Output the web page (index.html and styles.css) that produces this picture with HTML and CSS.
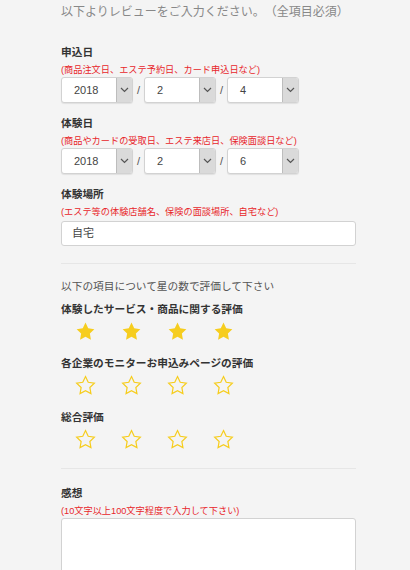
FILE: index.html
```html
<!DOCTYPE html>
<html lang="ja">
<head>
    <meta charset="UTF-8">
    <meta name="viewport" content="width=device-width, initial-scale=1.0">
    <title>レビュー入力</title>
    <link rel="stylesheet" href="styles.css">
</head>
<body>
    <div class="container">
        <p class="lead">以下よりレビューをご入力ください。（全項目必須）</p>

        <div class="field first">
            <div class="label">申込日</div>
            <div class="note">(商品注文日、エステ予約日、カード申込日など)</div>
            <div class="date-row">
                <div class="select"><span class="value">2018</span><span class="arrow"><svg width="9" height="6" viewBox="0 0 9 6"><path d="M1 1l3.5 3.5L8 1" fill="none" stroke="#555" stroke-width="1.2"/></svg></span></div>
                <span class="sep">/</span>
                <div class="select"><span class="value">2</span><span class="arrow"><svg width="9" height="6" viewBox="0 0 9 6"><path d="M1 1l3.5 3.5L8 1" fill="none" stroke="#555" stroke-width="1.2"/></svg></span></div>
                <span class="sep">/</span>
                <div class="select"><span class="value">4</span><span class="arrow"><svg width="9" height="6" viewBox="0 0 9 6"><path d="M1 1l3.5 3.5L8 1" fill="none" stroke="#555" stroke-width="1.2"/></svg></span></div>
            </div>
        </div>

        <div class="field">
            <div class="label">体験日</div>
            <div class="note">(商品やカードの受取日、エステ来店日、保険面談日など)</div>
            <div class="date-row">
                <div class="select"><span class="value">2018</span><span class="arrow"><svg width="9" height="6" viewBox="0 0 9 6"><path d="M1 1l3.5 3.5L8 1" fill="none" stroke="#555" stroke-width="1.2"/></svg></span></div>
                <span class="sep">/</span>
                <div class="select"><span class="value">2</span><span class="arrow"><svg width="9" height="6" viewBox="0 0 9 6"><path d="M1 1l3.5 3.5L8 1" fill="none" stroke="#555" stroke-width="1.2"/></svg></span></div>
                <span class="sep">/</span>
                <div class="select"><span class="value">6</span><span class="arrow"><svg width="9" height="6" viewBox="0 0 9 6"><path d="M1 1l3.5 3.5L8 1" fill="none" stroke="#555" stroke-width="1.2"/></svg></span></div>
            </div>
        </div>

        <div class="field">
            <div class="label">体験場所</div>
            <div class="note">(エステ等の体験店舗名、保険の面談場所、自宅など)</div>
            <div class="text-input">自宅</div>
        </div>

        <hr class="divider">

        <p class="question">以下の項目について星の数で評価して下さい</p>

        <div class="rating">
            <div class="label">体験したサービス・商品に関する評価</div>
            <div class="stars">
                <svg class="star" viewBox="0 0 24 24"><path class="full" d="M12 1.8l3.1 6.5 7 1-5.1 5 1.2 7L12 18l-6.2 3.3 1.2-7-5.1-5 7-1z"/></svg>
                <svg class="star" viewBox="0 0 24 24"><path class="full" d="M12 1.8l3.1 6.5 7 1-5.1 5 1.2 7L12 18l-6.2 3.3 1.2-7-5.1-5 7-1z"/></svg>
                <svg class="star" viewBox="0 0 24 24"><path class="full" d="M12 1.8l3.1 6.5 7 1-5.1 5 1.2 7L12 18l-6.2 3.3 1.2-7-5.1-5 7-1z"/></svg>
                <svg class="star" viewBox="0 0 24 24"><path class="full" d="M12 1.8l3.1 6.5 7 1-5.1 5 1.2 7L12 18l-6.2 3.3 1.2-7-5.1-5 7-1z"/></svg>
            </div>
        </div>

        <div class="rating">
            <div class="label">各企業のモニターお申込みページの評価</div>
            <div class="stars">
                <svg class="star" viewBox="0 0 24 24"><path class="empty" d="M12 1.8l3.1 6.5 7 1-5.1 5 1.2 7L12 18l-6.2 3.3 1.2-7-5.1-5 7-1z"/></svg>
                <svg class="star" viewBox="0 0 24 24"><path class="empty" d="M12 1.8l3.1 6.5 7 1-5.1 5 1.2 7L12 18l-6.2 3.3 1.2-7-5.1-5 7-1z"/></svg>
                <svg class="star" viewBox="0 0 24 24"><path class="empty" d="M12 1.8l3.1 6.5 7 1-5.1 5 1.2 7L12 18l-6.2 3.3 1.2-7-5.1-5 7-1z"/></svg>
                <svg class="star" viewBox="0 0 24 24"><path class="empty" d="M12 1.8l3.1 6.5 7 1-5.1 5 1.2 7L12 18l-6.2 3.3 1.2-7-5.1-5 7-1z"/></svg>
            </div>
        </div>

        <div class="rating">
            <div class="label">総合評価</div>
            <div class="stars">
                <svg class="star" viewBox="0 0 24 24"><path class="empty" d="M12 1.8l3.1 6.5 7 1-5.1 5 1.2 7L12 18l-6.2 3.3 1.2-7-5.1-5 7-1z"/></svg>
                <svg class="star" viewBox="0 0 24 24"><path class="empty" d="M12 1.8l3.1 6.5 7 1-5.1 5 1.2 7L12 18l-6.2 3.3 1.2-7-5.1-5 7-1z"/></svg>
                <svg class="star" viewBox="0 0 24 24"><path class="empty" d="M12 1.8l3.1 6.5 7 1-5.1 5 1.2 7L12 18l-6.2 3.3 1.2-7-5.1-5 7-1z"/></svg>
                <svg class="star" viewBox="0 0 24 24"><path class="empty" d="M12 1.8l3.1 6.5 7 1-5.1 5 1.2 7L12 18l-6.2 3.3 1.2-7-5.1-5 7-1z"/></svg>
            </div>
        </div>

        <hr class="divider second">

        <div class="field impression">
            <div class="label">感想</div>
            <div class="note">(10文字以上100文字程度で入力して下さい)</div>
            <div class="textarea"></div>
        </div>
    </div>
</body>
</html>
```

FILE: styles.css
```css
body {
    font-family: "Liberation Sans", "Noto Sans CJK JP", sans-serif;
    margin: 0;
    background-color: #f4f4f4;
    color: #333;
    text-spacing-trim: space-all;
}
.container {
    width: 295px;
    padding: 4px 0 0 61px;
}
.lead {
    margin: 0;
    font-size: 12px;
    line-height: 16px;
    color: #888;
}
.field {
    margin-top: 12px;
}
.field.first {
    margin-top: 24px;
}
.label {
    font-size: 10.7px;
    line-height: 16px;
    font-weight: bold;
    color: #333;
}
.note {
    margin-top: 4px;
    font-size: 9.2px;
    line-height: 12px;
    color: #e8262b;
}
.date-row {
    display: flex;
    align-items: center;
    margin-top: 1px;
}
.select {
    display: flex;
    width: 72px;
    height: 26px;
    box-sizing: border-box;
    background-color: #fff;
    border: 1px solid #d2d2d2;
    border-radius: 3px;
    box-shadow: 0 1px 1px rgba(0,0,0,0.08);
}
.value {
    flex: 1;
    padding-left: 12px;
    font-size: 11px;
    line-height: 24px;
    color: #444;
}
.arrow {
    display: flex;
    align-items: center;
    justify-content: center;
    width: 15px;
    background-color: #dadada;
    border-left: 1px solid #bdbdbd;
    border-radius: 0 2px 2px 0;
}
.sep {
    width: 11px;
    text-align: center;
    font-size: 11px;
    color: #555;
}
.text-input {
    margin-top: 3px;
    height: 25px;
    box-sizing: border-box;
    padding-left: 10px;
    background-color: #fff;
    border: 1px solid #d2d2d2;
    border-radius: 3px;
    font-size: 11px;
    line-height: 23px;
    color: #444;
}
.divider {
    margin: 17px 0 0;
    border: none;
    border-top: 1px solid #e6e6e6;
}
.divider.second {
    margin-top: 18px;
}
.question {
    margin: 14px 0 0;
    font-size: 10.7px;
    line-height: 16px;
    color: #555;
}
.rating {
    margin-top: 13px;
}
.question + .rating {
    margin-top: 7px;
}
.stars {
    display: flex;
    gap: 25px;
    margin-top: 4px;
    padding-left: 14px;
}
.star {
    width: 21px;
    height: 21px;
}
.full {
    fill: #f6cd1e;
}
.empty {
    fill: none;
    stroke: #f6cd1e;
    stroke-width: 1.4;
    stroke-linejoin: miter;
}
.impression {
    margin-top: 16px;
}
.textarea {
    margin-top: 1px;
    height: 100px;
    background-color: #fff;
    border: 1px solid #d2d2d2;
    border-radius: 3px;
}
```
